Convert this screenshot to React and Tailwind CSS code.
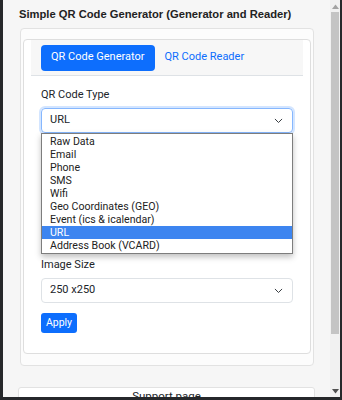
import React from "react";

const options = [
  "Raw Data",
  "Email",
  "Phone",
  "SMS",
  "Wifi",
  "Geo Coordinates (GEO)",
  "Event (ics & icalendar)",
  "URL",
  "Address Book (VCARD)",
];

const Chevron = () => (
  <svg width="9" height="6" viewBox="0 0 9 6" fill="none" className="shrink-0">
    <path d="M1.2 1.2l3.3 3.3 3.3-3.3" stroke="#3a3f44" strokeWidth="1" strokeLinecap="round" strokeLinejoin="round" />
  </svg>
);

const App = () => {
  return (
    <div className="w-[342px] h-[400px] bg-[#26282b] pl-[3px] pr-[2px] pb-[3px] overflow-hidden font-['Roboto',sans-serif]">
      <div className="flex h-full bg-[#f6f6f6]">
        <div className="flex-1 overflow-hidden">
          <h1 className="h-[28px] pl-[16px] pt-[6px] text-[11.2px] font-bold text-[#222] font-['Liberation_Sans',Arial,sans-serif]">
            Simple QR Code Generator (Generator and Reader)
          </h1>

          <div className="ml-[17px] w-[294px] bg-[#fcfcfc] border border-[#e2e2e2] rounded-[4px] pt-[10px] px-[2px] pb-[11px]">
            <div className="bg-white border border-[#dedede] rounded-[4px] pb-[20px]">
              <div className="mx-[7px] h-[36px] bg-[#f7f7f7] border-b border-[#dee2e6] flex items-center pl-[10px] gap-[10px]">
                <div className="h-[26px] px-[10px] bg-[#0d6efd] rounded-[4px] flex items-center text-white text-[11px]">
                  QR Code Generator
                </div>
                <div className="text-[#0d6efd] text-[11px]">QR Code Reader</div>
              </div>

              <div className="px-[17px] pt-[12px]">
                <label className="block text-[11px] text-[#212529] leading-[14px]">QR Code Type</label>
                <div className="relative mt-[6px]">
                  <div className="h-[25px] border border-[#86b7fe] rounded-[4px] shadow-[0_0_0_2px_rgba(13,110,253,0.18)] flex items-center justify-between pl-[8px] pr-[9px] text-[11px] text-[#212529]">
                    <span>URL</span>
                    <Chevron />
                  </div>
                  <ul className="absolute left-0 right-0 top-[25px] z-10 bg-white border border-[#7d7d7d] shadow-[0_3px_6px_rgba(0,0,0,0.25)] pt-[1px] pb-[1px] text-[10.6px] text-[#222]">
                    {options.map((o) => (
                      <li
                        key={o}
                        className={
                          o === "URL"
                            ? "h-[13px] leading-[13px] pl-[8px] bg-[#3d85f0] text-white"
                            : "h-[13px] leading-[13px] pl-[8px]"
                        }
                      >
                        {o}
                      </li>
                    ))}
                  </ul>
                </div>

                <div className="h-[125px]" />

                <label className="block text-[11px] text-[#212529] leading-[14px]">Image Size</label>
                <div className="mt-[6px] h-[25px] border border-[#dee2e6] rounded-[4px] flex items-center justify-between pl-[8px] pr-[9px] text-[11px] text-[#212529]">
                  <span>250 x250</span>
                  <Chevron />
                </div>

                <button className="mt-[10px] h-[20px] w-[36px] bg-[#0d6efd] rounded-[3px] text-white text-[10.5px] flex items-center justify-center">
                  Apply
                </button>
              </div>
            </div>
          </div>

          <div className="ml-[15px] mt-[21px] w-[297px] h-[20px] bg-white border border-[#e2e2e2] rounded-t-[3px] text-center text-[11.5px] leading-[14px] text-[#212529] pt-[1px]">
            Support page
          </div>
        </div>

        <div className="w-[10px] bg-[#f1f1f1] flex flex-col items-center">
          <svg width="7" height="5" viewBox="0 0 7 5" className="mt-[4px]">
            <path d="M0 5L3.5 0.5L7 5z" fill="#a3a3a3" />
          </svg>
          <div className="mt-[3px] w-[8px] h-[322px] bg-[#c4c4c4]" />
          <div className="flex-1" />
          <svg width="7" height="5" viewBox="0 0 7 5" className="mb-[3px]">
            <path d="M0 0L3.5 4.5L7 0z" fill="#505050" />
          </svg>
        </div>
      </div>
    </div>
  );
};

export default App;
